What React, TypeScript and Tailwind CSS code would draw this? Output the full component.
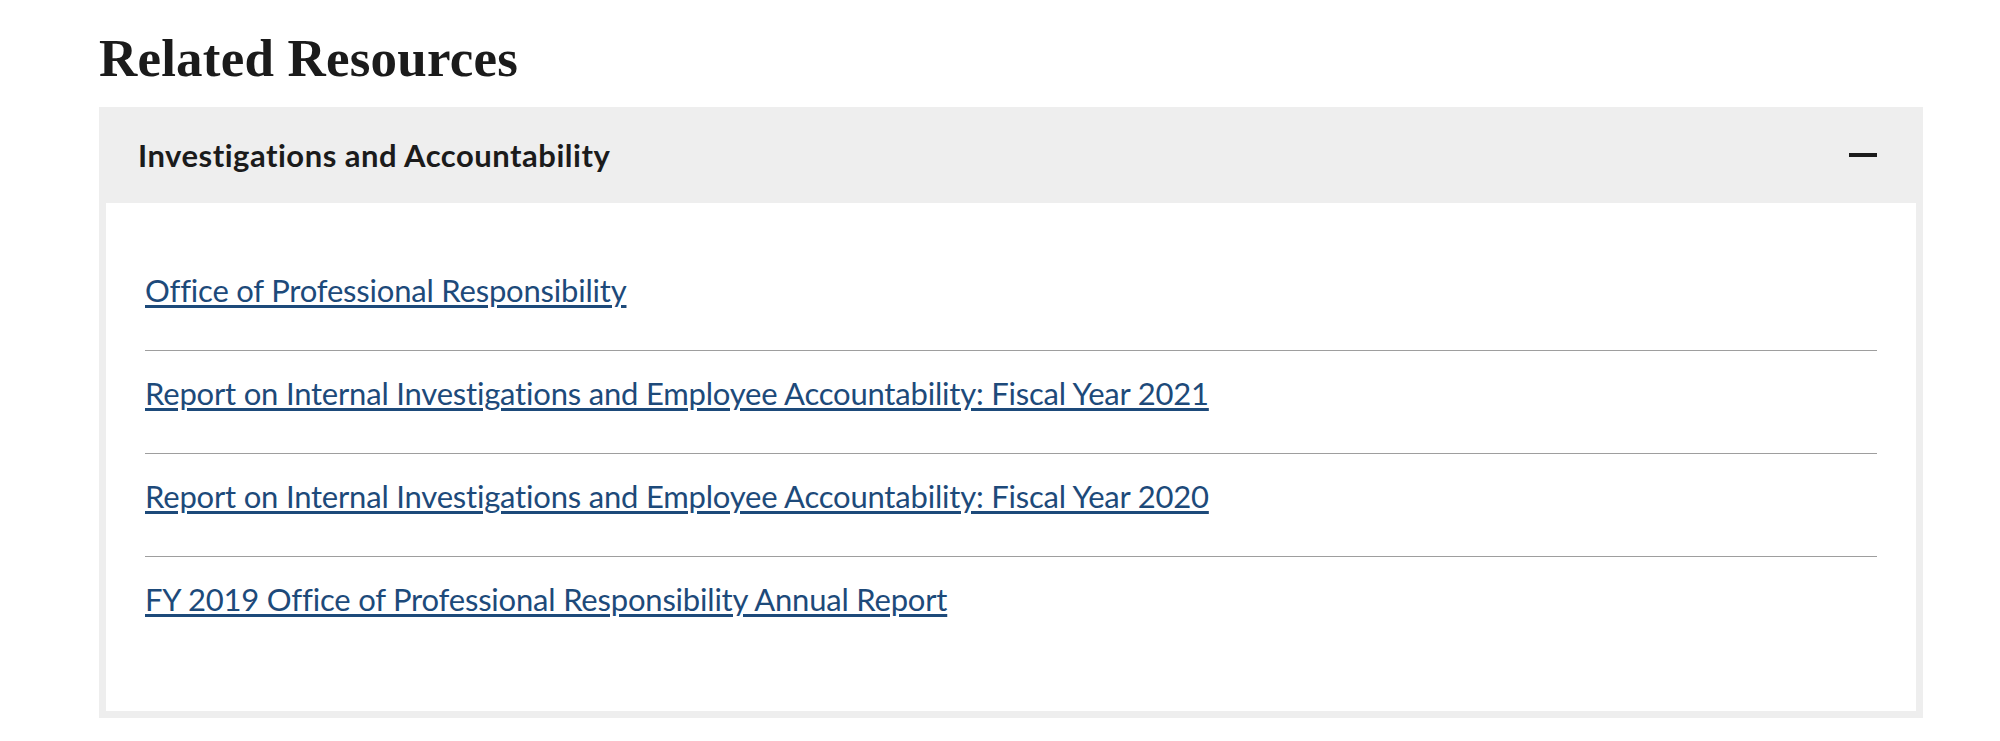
const links = [
  "Office of Professional Responsibility",
  "Report on Internal Investigations and Employee Accountability: Fiscal Year 2021",
  "Report on Internal Investigations and Employee Accountability: Fiscal Year 2020",
  "FY 2019 Office of Professional Responsibility Annual Report",
];

export default function App() {
  return (
    <div className="min-h-screen bg-white pl-[99px] pr-[77px] pt-[32px]">
      <h2 className="font-['Liberation_Serif',serif] text-[53px] leading-[53px] font-bold tracking-[0.2px] text-[#1b1b1b]">
        Related Resources
      </h2>

      <div className="mt-[22px] bg-[#eeeeee] px-[7px] pb-[7px]">
        {/* accordion header */}
        <div className="flex h-[96px] items-center justify-between pl-[32px] pr-[39px]">
          <h3 className="font-['Lato',sans-serif] text-[31px] font-bold tracking-[0.5px] text-[#1b1b1b]">
            Investigations and Accountability
          </h3>
          <span className="block h-[4px] w-[28px] bg-[#1b1b1b]" />
        </div>

        {/* accordion body */}
        <div className="bg-white px-[39px] pb-[52px] pt-[45px]">
          <ul className="font-['Lato',sans-serif] text-[31px] leading-[48px] tracking-[-0.2px]">
            {links.map((l, i) => (
              <li
                key={l}
                className={
                  i === 0
                    ? "pb-[36px] pt-[18px]"
                    : "border-t border-[#9e9e9e] pb-[36px] pt-[18px]"
                }
              >
                <a href="#" className="text-[#1d4a7a] underline underline-offset-[3px]">
                  {l}
                </a>
              </li>
            ))}
          </ul>
        </div>
      </div>
    </div>
  );
}
